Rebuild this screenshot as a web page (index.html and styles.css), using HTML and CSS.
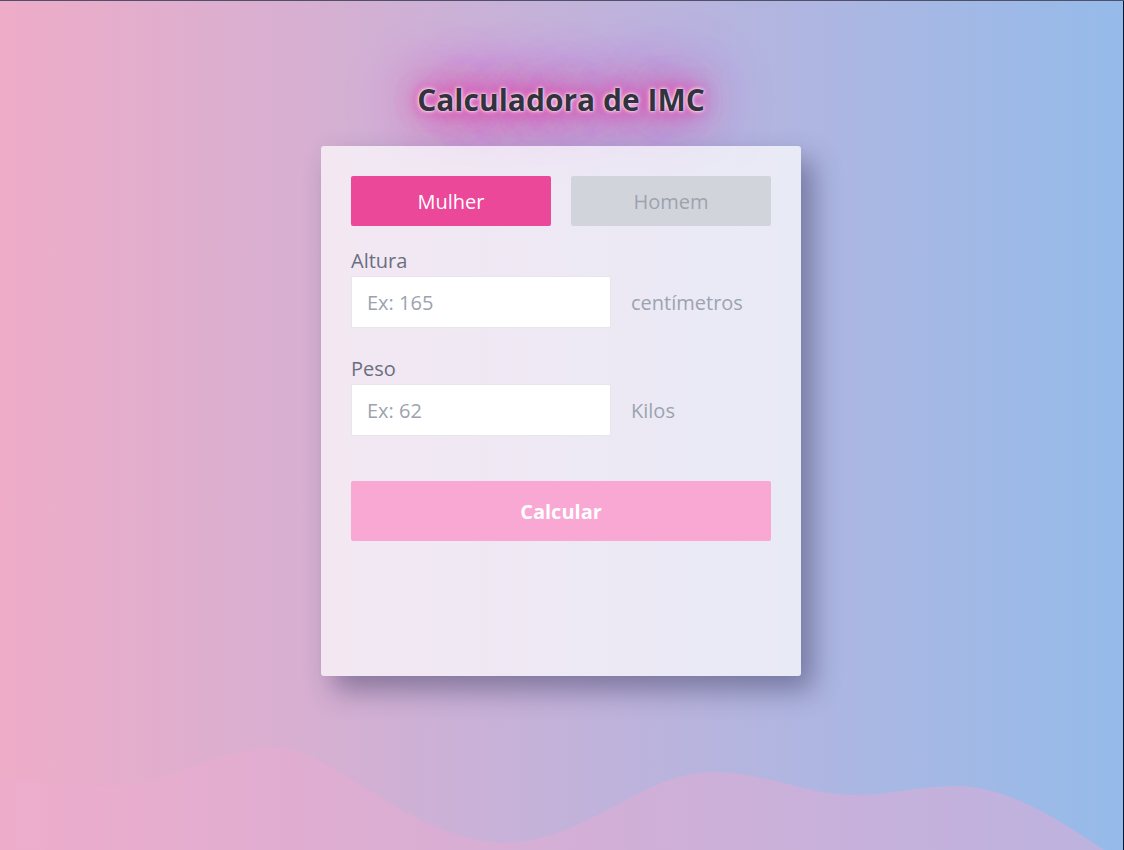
FILE: index.html
```html
<!DOCTYPE html>
<html lang="pt">
<head>
<meta charset="utf-8">
<title>Calculadora de IMC</title>
<link rel="stylesheet" href="styles.css">
</head>
<body>
<div class="page">
  <svg class="wave" viewBox="0 0 1124 110" preserveAspectRatio="none" aria-hidden="true">
    <defs>
      <linearGradient id="wg" x1="0" y1="0" x2="1" y2="0">
        <stop offset="0" stop-color="#eeaccd" stop-opacity="0.55"/>
        <stop offset="0.4" stop-color="#e2acd2" stop-opacity="0.6"/>
        <stop offset="1" stop-color="#c7b0dc" stop-opacity="0.8"/>
      </linearGradient>
    </defs>
    <path fill="url(#wg)" d="M0,40 C50,40 90,50 129,45 C180,38 230,5 280,8 C340,12 430,120 530,100 C600,88 650,30 717,32 C770,34 810,55 853,55 C890,55 925,45 960,46 C1010,48 1060,80 1104,110 L0,110 Z"/>
  </svg>
  <h1 class="title">Calculadora de IMC</h1>
  <main class="card">
    <div class="genders">
      <button class="gender active">Mulher</button>
      <button class="gender">Homem</button>
    </div>
    <label class="label" for="altura">Altura</label>
    <div class="field">
      <input id="altura" class="input" type="text" placeholder="Ex: 165">
      <span class="unit">centímetros</span>
    </div>
    <label class="label second" for="peso">Peso</label>
    <div class="field">
      <input id="peso" class="input" type="text" placeholder="Ex: 62">
      <span class="unit">Kilos</span>
    </div>
    <button class="calc">Calcular</button>
  </main>
</div>
</body>
</html>
```

FILE: styles.css
```css
* { box-sizing: border-box; }
html, body { margin: 0; padding: 0; }
body {
  font-family: "Open Sans", "Noto Sans", sans-serif;
  background: linear-gradient(to right, #eeacc8 0%, #c3b2da 50%, #95bbea 100%);
  min-height: 850px;
  overflow: hidden;
}
.page {
  position: relative;
  height: 850px;
  padding-right: 2px;
  border-top: 1px solid #50506a;
  display: flex;
  flex-direction: column;
  align-items: center;
}
.page::after {
  content: "";
  position: absolute;
  top: 0;
  right: 0;
  width: 1px;
  height: 100%;
  background: #0e1424;
}
.wave {
  position: absolute;
  left: 0;
  bottom: 0;
  width: 1124px;
  height: 110px;
}
.title {
  margin: 79px 0 0;
  height: 40px;
  line-height: 40px;
  font-size: 30px;
  font-weight: 700;
  color: #333340;
  text-shadow: 0 0 2px #fff, 0 0 5px #fff, 0 0 10px #e848b0, 0 0 22px #e040a8, 0 0 36px #e040a8, 0 0 56px #d850b8, 0 0 80px #d050b8;
  position: relative;
}
.card {
  position: relative;
  margin-top: 26px;
  width: 480px;
  height: 530px;
  padding: 30px;
  border-radius: 3px;
  background: rgba(255, 255, 255, 0.71);
  box-shadow: 12px 14px 28px rgba(45, 45, 85, 0.45);
  display: flex;
  flex-direction: column;
}
.genders {
  display: flex;
  gap: 20px;
}
.gender {
  width: 200px;
  height: 50px;
  border: 0;
  border-radius: 2px;
  background: #d1d5db;
  color: #9ca3af;
  font-family: inherit;
  font-size: 20px;
  padding: 0;
}
.gender.active {
  background: #ec4899;
  color: #fff;
}
.label {
  margin-top: 22px;
  font-size: 20px;
  line-height: 26px;
  color: #6b6e80;
}
.label.second { margin-top: 28px; }
.field {
  display: flex;
  align-items: center;
  gap: 20px;
  margin-top: 2px;
}
.input {
  width: 260px;
  height: 52px;
  border: 1px solid #e5e7eb;
  border-radius: 2px;
  background: #fff;
  padding: 0 15px;
  font-family: inherit;
  font-size: 20px;
  color: #374151;
}
.input::placeholder { color: #9ca3af; }
.unit {
  font-size: 20px;
  color: #9ca3af;
}
.calc {
  margin-top: 45px;
  height: 60px;
  width: 420px;
  border: 0;
  border-radius: 2px;
  background: #f9a8d4;
  color: #fff;
  font-family: inherit;
  font-size: 20px;
  font-weight: 700;
  padding: 0;
}
```
